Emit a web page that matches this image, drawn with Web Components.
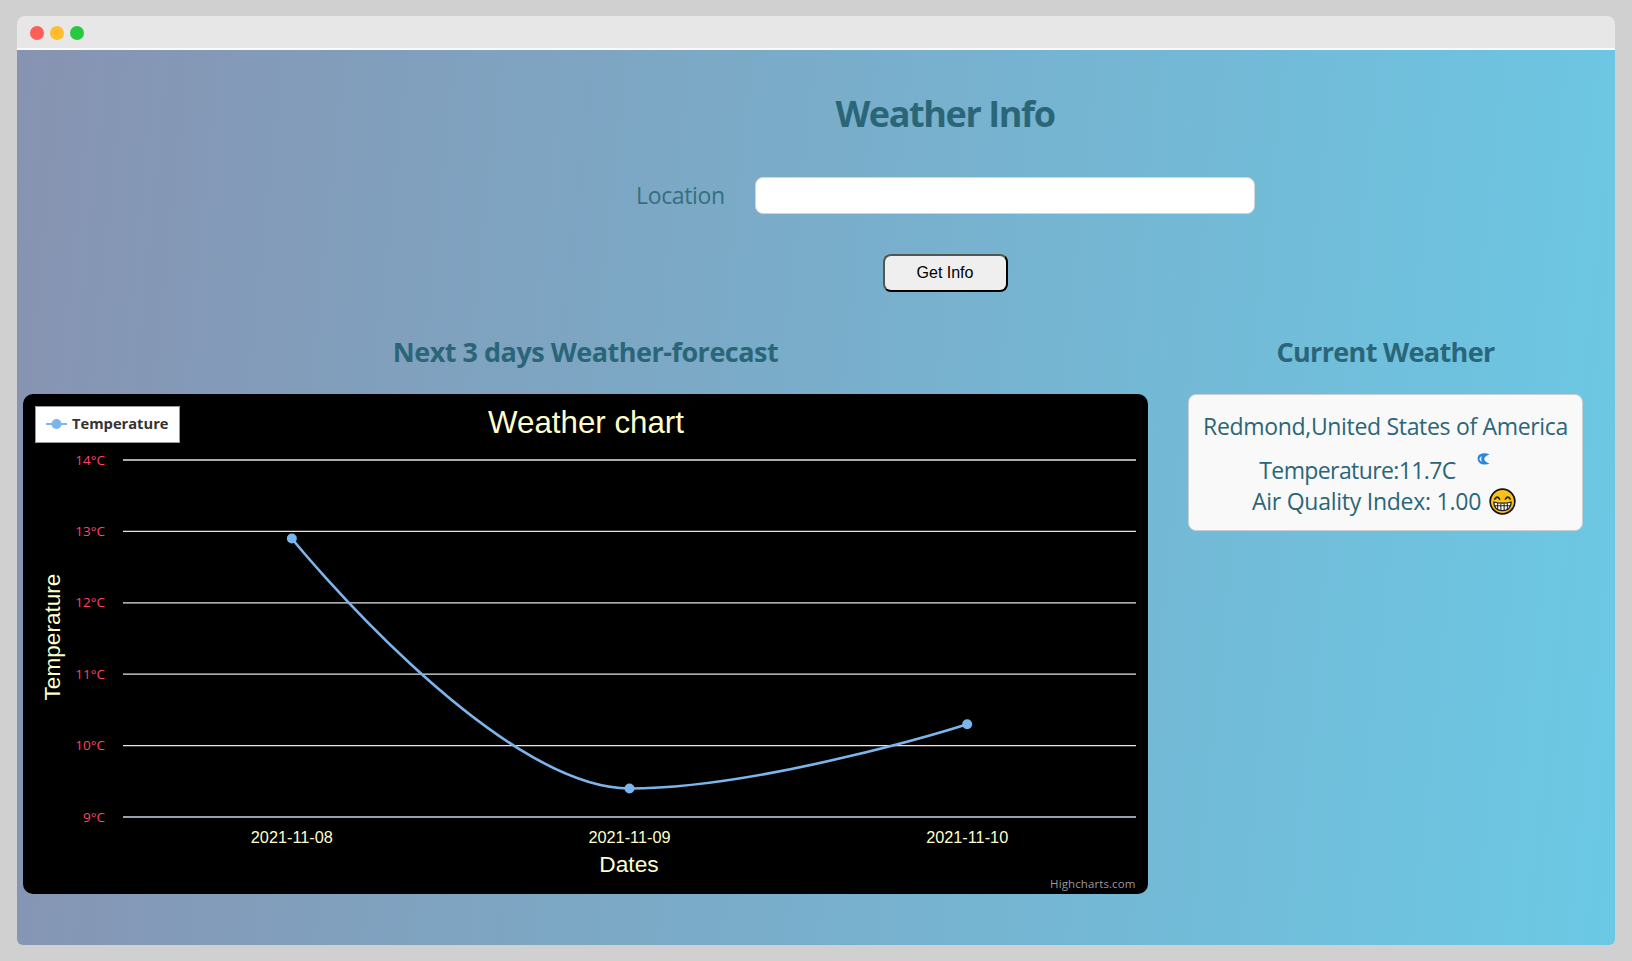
<!DOCTYPE html>
<html>
<head>
<meta charset="utf-8">
<title>Weather Info</title>
<style>
  html, body { margin: 0; height: 100%; }
  body { background: #d0d0d0; font-family: "Open Sans", "Noto Sans", sans-serif; color: #2a6678; }
</style>
</head>
<body>
<app-window>
  <weather-form></weather-form>
  <div style="display:grid;grid-template-columns:1125px 395px;column-gap:40px;padding-left:6px;margin-top:40px">
    <forecast-panel></forecast-panel>
    <current-weather></current-weather>
  </div>
</app-window>

<script>
class AppWindow extends HTMLElement {
    constructor() {
        super();
        this.attachShadow({ mode: 'open' });
        this.shadowRoot.innerHTML = `
            <style>
                :host { display: block; padding: 16px 17px 16px 17px; box-sizing: border-box; height: 961px; }
                .frame { height: 929px; display: flex; flex-direction: column; border-radius: 8px 8px 6px 6px; overflow: hidden; }
                .bar {
                    box-sizing: border-box;
                    background: #e7e7e7;
                    border-bottom: 2px solid #fafafa;
                    display: flex;
                    align-items: center;
                    gap: 6px;
                    padding: 1px 0 0 13px;
                    flex: none;
                    height: 34px;
                }
                .dot { width: 14px; height: 14px; border-radius: 50%; }
                .content {
                    flex: 1;
                    background: linear-gradient(96deg, #8793b1 0%, #6bc9e5 100%);
                }
            </style>
            <div class="frame">
                <div class="bar">
                    <span class="dot" style="background:#ff5f57"></span>
                    <span class="dot" style="background:#ffbd2e"></span>
                    <span class="dot" style="background:#28c940"></span>
                </div>
                <div class="content"><slot></slot></div>
            </div>`;
    }
}
customElements.define('app-window', AppWindow);

class WeatherForm extends HTMLElement {
    constructor() {
        super();
        this.attachShadow({ mode: 'open' });
        this.shadowRoot.innerHTML = `
            <style>
                :host { display: block; margin-left: 258px; padding-top: 40px; color: #2a6678; }
                h1 { margin: 0; font-size: 36px; line-height: 48px; font-weight: 700; text-align: center; letter-spacing: -1.4px; }
                .row { display: flex; align-items: center; margin-top: 39px; padding-left: 361px; }
                label { width: 119px; font-size: 23px; line-height: 36px; letter-spacing: -.35px; color: #33707f; margin-top: -2px; }
                input {
                    width: 500px; height: 37px; box-sizing: border-box;
                    border: 1px solid #cfd4d8; border-radius: 8px; background: #fff; padding: 0 10px;
                }
                .actions { display: flex; justify-content: center; margin-top: 40px; }
                button {
                    width: 125px; height: 38px; box-sizing: border-box;
                    border: 2px outset #555; border-radius: 8px; background: #efefef;
                    font: 16px "Liberation Sans", Arial, sans-serif; color: #000;
                }
            </style>
            <h1>Weather Info</h1>
            <div class="row">
                <label>Location</label>
                <input type="text">
            </div>
            <div class="actions"><button>Get Info</button></div>`;
    }
}
customElements.define('weather-form', WeatherForm);

class ForecastPanel extends HTMLElement {
    constructor() {
        super();
        this.attachShadow({ mode: 'open' });
        this.shadowRoot.innerHTML = `
            <style>
                :host { display: block; }
                h2 { margin: 0 0 22px; font-size: 27px; line-height: 40px; font-weight: 700; text-align: center; color: #2a6678; letter-spacing: -.5px; }
            </style>
            <h2>Next 3 days Weather-forecast</h2>
            <weather-chart></weather-chart>`;
    }
}
customElements.define('forecast-panel', ForecastPanel);

class WeatherChart extends HTMLElement {
    constructor() {
        super();
        this.attachShadow({ mode: 'open' });

        this.plot = { left: 100, right: 1113, bottom: 423, stepY: 71.4 };
        this.dates = ['2021-11-08', '2021-11-09', '2021-11-10'];
        this.temps = [12.9, 9.4, 10.3];
        this.ticks = [9, 10, 11, 12, 13, 14];
    }

    connectedCallback() { this.render(); }

    render() {
        const p = this.plot;
        const catW = (p.right - p.left) / this.dates.length;
        const x = i => p.left + catW * (i + 0.5);
        const y = t => p.bottom - (t - 9) * p.stepY;

        const grid = this.ticks.map(t => `
            <line x1="${p.left}" x2="${p.right}" y1="${y(t)}" y2="${y(t)}" stroke="${t === 9 ? '#ccd6eb' : '#e6e6e6'}" stroke-width="1.3"/>
            <text class="ylab" x="82" y="${y(t) + 4.5}" text-anchor="end">${t}°C</text>`).join('');

        const dates = this.dates.map((d, i) =>
            `<text class="xlab" x="${x(i)}" y="449" text-anchor="middle">${d}</text>`).join('');

        const dots = this.temps.map((t, i) =>
            `<circle cx="${x(i)}" cy="${y(t)}" r="5" fill="#7cb5ec"/>`).join('');

        // middle point is the minimum so the tangent there is flat
        const cw = catW / 2.5;
        const line = `M${x(0)} ${y(12.9)} C${x(0)} ${y(12.9)} ${x(1) - cw} ${y(9.4)} ${x(1)} ${y(9.4)}
                      C${x(1) + cw} ${y(9.4)} ${x(2)} ${y(10.3)} ${x(2)} ${y(10.3)}`;

        this.shadowRoot.innerHTML = `
            <style>
                :host { display: block; height: 500px; background: #000; border-radius: 10px; overflow: hidden; position: relative; }
                svg { display: block; }
                text { font-family: "Liberation Sans", Arial, sans-serif; fill: #ffffcc; }
                .ylab { font-family: "Open Sans", sans-serif; font-size: 13.5px; fill: #ff4464; }
                .xlab { font-size: 16.3px; }
                .credit { font-family: "Open Sans", sans-serif; font-size: 11.5px; fill: #999; letter-spacing: .1px; }
                .legend-text { font-family: "Open Sans", sans-serif; font-size: 14.7px; font-weight: 700; fill: #333; }
            </style>
            <svg width="1125" height="500" viewBox="0 0 1125 500">
                <text x="563" y="39" font-size="31.3" text-anchor="middle">Weather chart</text>
                ${grid}
                ${dates}
                <text x="606" y="478" font-size="22.7" text-anchor="middle">Dates</text>
                <text transform="translate(37 243) rotate(-90)" font-size="22.6" text-anchor="middle">Temperature</text>
                <path d="${line}" fill="none" stroke="#7cb5ec" stroke-width="2.6"/>
                ${dots}
                <rect x="12.5" y="12.5" width="144" height="36" fill="#fff" stroke="#999"/>
                <path d="M23 30h21" stroke="#7cb5ec" stroke-width="2"/>
                <circle cx="33.5" cy="30" r="5" fill="#7cb5ec"/>
                <text class="legend-text" x="49" y="35">Temperature</text>
                <text class="credit" x="1112.5" y="494" text-anchor="end">Highcharts.com</text>
            </svg>`;
    }
}
customElements.define('weather-chart', WeatherChart);

class CurrentWeather extends HTMLElement {
    constructor() {
        super();
        this.attachShadow({ mode: 'open' });
        this.shadowRoot.innerHTML = `
            <style>
                :host { display: block; color: #2a6678; }
                h2 { margin: 0 0 22px; font-size: 27px; line-height: 40px; font-weight: 700; text-align: center; letter-spacing: -.65px; }
                .card {
                    height: 137px; box-sizing: border-box;
                    background: #f9f9f9; border: 1px solid #c9ced2; border-radius: 8px;
                    padding-top: 15px;
                    text-align: center; font-size: 23px; letter-spacing: -.32px;
                }
                .line { display: flex; justify-content: center; align-items: center; }
                .place { height: 32px; line-height: 32px; }
                .temp { height: 32px; line-height: 32px; margin-top: 12px; letter-spacing: -.6px; }
                .air { height: 32px; line-height: 32px; margin-top: -1px; letter-spacing: -.25px; }
                .moon { margin: -23px 22px 0 21px; width: 13px; height: 12px; }
                .emoji { margin: 0 3px 0 8px; width: 27px; height: 27px; }
            </style>
            <h2>Current Weather</h2>
            <div class="card">
                <div class="line place">Redmond,United States of America</div>
                <div class="line temp">Temperature:11.7C
                    <svg class="moon" viewBox="0 0 13 12"><path d="M12.5 1.2C9 -.4 4.5 -.2 2.2 1.8 -.2 4 .2 8 2.6 10 5 11.8 9.5 12 12.5 10.6 9.8 9.8 7.4 8 7.2 6 7.4 4 9.8 2.2 12.5 1.2ZM5 3.3C4 4.4 4 7.4 5 8.7 3.2 8 2.5 6.8 2.5 6 2.5 5 3.3 3.9 5 3.3Z" fill="#2b86e0" fill-rule="evenodd"/></svg>
                </div>
                <div class="line air">Air Quality Index: 1.00
                    <svg class="emoji" viewBox="0 0 28 28">
                        <circle cx="14" cy="14" r="12.8" fill="#fcc21b" stroke="#111" stroke-width="1.8"/>
                        <path d="M6 11.5Q8.5 7.5 11 11.5M17 11.5Q19.5 7.5 22 11.5" fill="none" stroke="#222" stroke-width="1.7" stroke-linecap="round"/>
                        <path d="M5 14.5Q14 17 23 14.5Q22.5 23.5 14 23.5Q5.5 23.5 5 14.5Z" fill="#fff" stroke="#222" stroke-width="1.3"/>
                        <path d="M5.5 18.5H22.5M9 15.5V22M12.3 16V23.3M15.7 16V23.3M19 15.5V22" stroke="#222" stroke-width="1.1" fill="none"/>
                    </svg>
                </div>
            </div>`;
    }
}
customElements.define('current-weather', CurrentWeather);
</script>
</body>
</html>
